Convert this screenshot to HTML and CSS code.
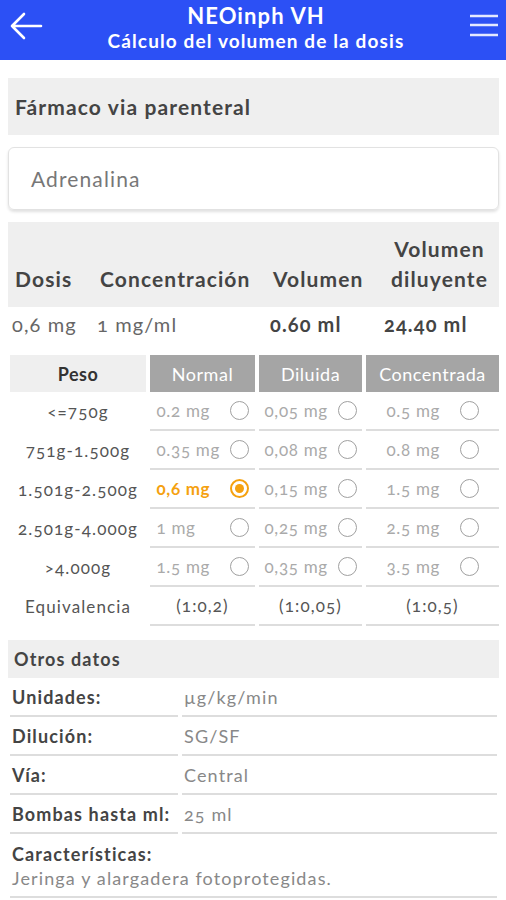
FILE: index.html
```html
<!DOCTYPE html>
<html lang="es">
<head>
  <meta charset="UTF-8">
  <meta name="viewport" content="width=device-width, initial-scale=1.0">
  <title>NEOinph VH - Cálculo del volumen de la dosis</title>
  <link rel="stylesheet" href="styles.css">
</head>
<body>
  <header class="appbar">
    <svg class="back" width="34" height="34" viewBox="0 0 34 34">
      <path d="M32 17H3M15 5L3 17L15 29" fill="none" stroke="#fff" stroke-width="2.6" stroke-linecap="round" stroke-linejoin="round"/>
    </svg>
    <div class="titles">
      <h1>NEOinph VH</h1>
      <h2>Cálculo del volumen de la dosis</h2>
    </div>
    <svg class="menu" width="30" height="26" viewBox="0 0 30 26">
      <path d="M1 3H29M1 12H29M1 22H29" stroke="#e4e8ff" stroke-width="2.6"/>
    </svg>
  </header>

  <main class="content">
    <div class="section-title big">Fármaco via parenteral</div>
    <div class="drug-input">Adrenalina</div>

    <table class="dose-table">
      <colgroup><col class="c1"><col class="c2"><col class="c3"><col class="c4"></colgroup>
      <thead>
        <tr><th>Dosis</th><th>Concentración</th><th>Volumen</th><th>Volumen diluyente</th></tr>
      </thead>
      <tbody>
        <tr><td>0,6 mg</td><td>1 mg/ml</td><td class="strong">0.60 ml</td><td class="strong">24.40 ml</td></tr>
      </tbody>
    </table>

    <table class="weight-table">
      <colgroup><col class="w1"><col class="w2"><col class="w3"><col class="w4"></colgroup>
      <thead>
        <tr><th class="peso">Peso</th><th>Normal</th><th>Diluida</th><th>Concentrada</th></tr>
      </thead>
      <tbody>
        <tr>
          <td class="range">&lt;=750g</td>
          <td><span class="opt"><span class="dose">0.2 mg</span><span class="radio"></span></span></td>
          <td><span class="opt"><span class="dose">0,05 mg</span><span class="radio"></span></span></td>
          <td><span class="opt"><span class="dose">0.5 mg</span><span class="radio"></span></span></td>
        </tr>
        <tr>
          <td class="range">751g-1.500g</td>
          <td><span class="opt"><span class="dose">0.35 mg</span><span class="radio"></span></span></td>
          <td><span class="opt"><span class="dose">0,08 mg</span><span class="radio"></span></span></td>
          <td><span class="opt"><span class="dose">0.8 mg</span><span class="radio"></span></span></td>
        </tr>
        <tr>
          <td class="range">1.501g-2.500g</td>
          <td><span class="opt selected"><span class="dose">0,6 mg</span><span class="radio"></span></span></td>
          <td><span class="opt"><span class="dose">0,15 mg</span><span class="radio"></span></span></td>
          <td><span class="opt"><span class="dose">1.5 mg</span><span class="radio"></span></span></td>
        </tr>
        <tr>
          <td class="range">2.501g-4.000g</td>
          <td><span class="opt"><span class="dose">1 mg</span><span class="radio"></span></span></td>
          <td><span class="opt"><span class="dose">0,25 mg</span><span class="radio"></span></span></td>
          <td><span class="opt"><span class="dose">2.5 mg</span><span class="radio"></span></span></td>
        </tr>
        <tr>
          <td class="range">&gt;4.000g</td>
          <td><span class="opt"><span class="dose">1.5 mg</span><span class="radio"></span></span></td>
          <td><span class="opt"><span class="dose">0,35 mg</span><span class="radio"></span></span></td>
          <td><span class="opt"><span class="dose">3.5 mg</span><span class="radio"></span></span></td>
        </tr>
        <tr class="equiv">
          <td class="range">Equivalencia</td>
          <td>(1:0,2)</td>
          <td>(1:0,05)</td>
          <td>(1:0,5)</td>
        </tr>
      </tbody>
    </table>

    <div class="section-title other">Otros datos</div>
    <table class="info-table">
      <colgroup><col class="i1"><col class="i2"></colgroup>
      <tbody>
        <tr><th>Unidades:</th><td>µg/kg/min</td></tr>
        <tr><th>Dilución:</th><td>SG/SF</td></tr>
        <tr><th>Vía:</th><td>Central</td></tr>
        <tr><th>Bombas hasta ml:</th><td>25 ml</td></tr>
        <tr class="wide"><td colspan="2"><strong>Características:</strong><br>Jeringa y alargadera fotoprotegidas.</td></tr>
      </tbody>
    </table>
  </main>
</body>
</html>
```

FILE: styles.css
```css
* { margin: 0; padding: 0; box-sizing: border-box; }
body {
  font-family: Lato, "Open Sans", sans-serif;
  font-variant-numeric: oldstyle-nums;
  letter-spacing: 0.07em;
  background: #fff;
  color: #444;
  width: 506px;
  overflow: hidden;
}

.appbar {
  height: 60px;
  background: #2c50f5;
  display: flex;
  align-items: center;
  padding: 0 7px 0 9px;
  color: #fff;
}
.appbar .back { margin-top: -8px; }
.appbar .menu { margin-top: -9px; }
.titles { flex: 1; text-align: center; }
.titles h1 { font-size: 22px; font-weight: 700; line-height: 26px; margin-top: -4px; }
.titles h2 { font-size: 19px; font-weight: 700; line-height: 24px; }

.content { padding: 18px 7px 0 8px; }

.section-title {
  background: #efefef;
  font-weight: 700;
  font-size: 18px;
  height: 38px;
  line-height: 38px;
  padding-left: 6px;
  color: #444;
}
.section-title.big { height: 57px; line-height: 57px; font-size: 21px; padding-left: 7px; }
.section-title.other { margin-top: 14px; }

.drug-input {
  margin-top: 12px;
  height: 63px;
  line-height: 61px;
  border: 1px solid #e2e2e2;
  border-radius: 6px;
  box-shadow: 0 2px 3px rgba(0,0,0,.12);
  padding-left: 22px;
  font-size: 21px;
  color: #777;
}

.dose-table {
  margin-top: 12px;
  width: 100%;
  border-collapse: collapse;
  table-layout: fixed;
}
.dose-table .c1 { width: 85px; }
.dose-table .c2 { width: 173px; }
.dose-table .c3 { width: 114px; }
.dose-table thead tr { background: #efefef; height: 85px; }
.dose-table th {
  vertical-align: bottom;
  text-align: left;
  font-size: 21px;
  font-weight: 700;
  line-height: 30px;
  padding: 0 0 13px 7px;
  color: #444;
  white-space: nowrap;
}
.dose-table th:nth-child(4) { text-align: center; padding-left: 0; white-space: normal; }
.dose-table td {
  font-size: 20px;
  height: 35px;
  padding: 0 0 2px 4px;
  color: #666;
  white-space: nowrap;
}
.dose-table td.strong { font-weight: 700; color: #444; }

.weight-table {
  margin-top: 13px;
  margin-left: -2px;
  width: 497px;
  border-collapse: separate;
  border-spacing: 4px 0;
  table-layout: fixed;
}
.weight-table .w1 { width: 136px; }
.weight-table .w2 { width: 105px; }
.weight-table .w3 { width: 103px; }
.weight-table th {
  height: 37px;
  background: #a5a5a5;
  color: #fff;
  font-weight: 400;
  font-size: 18px;
  letter-spacing: 0.03em;
}
.weight-table th.peso { background: #efefef; color: #333; font-weight: 700; }
.weight-table td {
  height: 39px;
  border-bottom: 2px solid #ddd;
  text-align: center;
  font-size: 17px;
  color: #555;
  white-space: nowrap;
}
.weight-table td.range { border-bottom: none; }
.opt { display: inline-flex; align-items: center; }
.dose { width: 73px; text-align: left; color: #aaa; font-size: 17px; letter-spacing: 0.04em; }
.radio {
  width: 19px;
  height: 19px;
  border: 1.6px solid #a0a0a0;
  border-radius: 50%;
  position: relative;
}
.opt.selected .dose { color: #f5a10f; font-weight: 700; }
.opt.selected .radio { border-color: #f5a10f; border-width: 2px; }
.opt.selected .radio::after {
  content: "";
  position: absolute;
  left: 3px; top: 3px;
  width: 9px; height: 9px;
  border-radius: 50%;
  background: #f5a10f;
}

.info-table {
  margin-left: -2px;
  width: 495px;
  border-collapse: separate;
  border-spacing: 4px 0;
  table-layout: fixed;
}
.info-table .i1 { width: 168px; }
.info-table th, .info-table td {
  height: 39px;
  border-bottom: 2px solid #ddd;
  text-align: left;
  font-size: 18px;
  vertical-align: middle;
  white-space: nowrap;
  padding-left: 2px;
}
.info-table th { font-weight: 700; color: #444; }
.info-table td { color: #888; }
.info-table tr.wide td { height: 64px; line-height: 24px; padding-top: 2px; white-space: normal; }
.info-table tr.wide strong { color: #444; }
```
